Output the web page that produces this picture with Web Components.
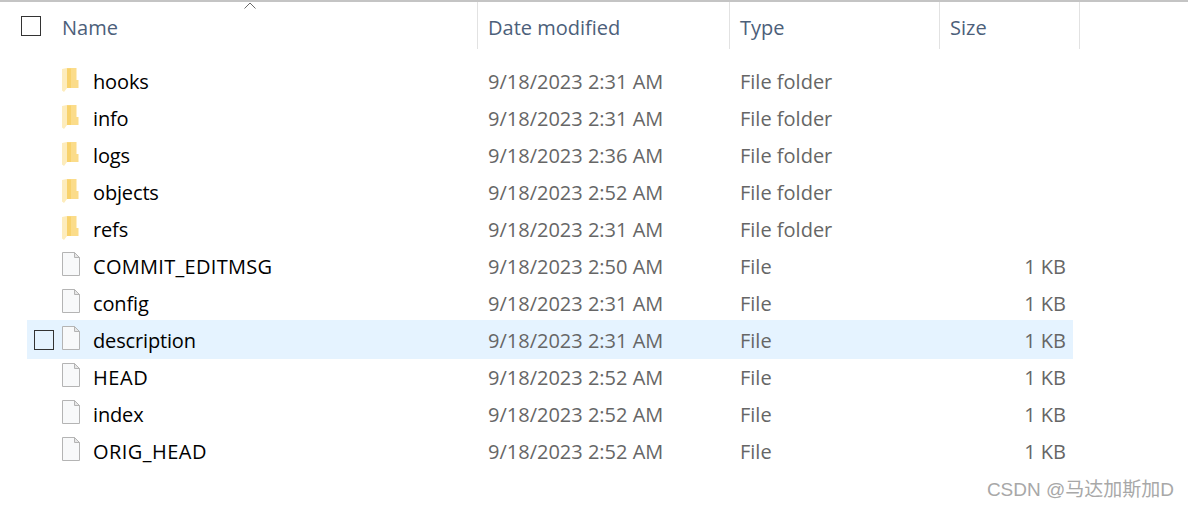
<!DOCTYPE html>
<html>
<head>
<meta charset="utf-8">
<style>
	html, body {margin: 0; background: #fff;}
	body {font-family: "Open Sans", sans-serif; height: 509px; overflow: hidden;}
</style>
</head>
<body>
<file-list>
	<file-row kind="folder" name="hooks" date="9/18/2023 2:31 AM" type="File folder"></file-row>
	<file-row kind="folder" name="info" date="9/18/2023 2:31 AM" type="File folder"></file-row>
	<file-row kind="folder" name="logs" date="9/18/2023 2:36 AM" type="File folder"></file-row>
	<file-row kind="folder" name="objects" date="9/18/2023 2:52 AM" type="File folder"></file-row>
	<file-row kind="folder" name="refs" date="9/18/2023 2:31 AM" type="File folder"></file-row>
	<file-row kind="file" name="COMMIT_EDITMSG" date="9/18/2023 2:50 AM" type="File" size="1 KB" style="--track:.3px"></file-row>
	<file-row kind="file" name="config" date="9/18/2023 2:31 AM" type="File" size="1 KB"></file-row>
	<file-row kind="file" name="description" date="9/18/2023 2:31 AM" type="File" size="1 KB" hot></file-row>
	<file-row kind="file" name="HEAD" date="9/18/2023 2:52 AM" type="File" size="1 KB" style="--track:.6px"></file-row>
	<file-row kind="file" name="index" date="9/18/2023 2:52 AM" type="File" size="1 KB"></file-row>
	<file-row kind="file" name="ORIG_HEAD" date="9/18/2023 2:52 AM" type="File" size="1 KB" style="--track:.45px"></file-row>
</file-list>
<script>
const icons = {
	folder: `<svg width="20" height="26" viewBox="0 0 20 26">
		<path d="M6 2h9.500v12h2V22H6z" fill="#fbdc8a"/>
		<path d="M6 2.500h4V22H6z" fill="#f8d26c"/>
		<path d="M1 3l5-1V22l-3 4-2-1.500z" fill="#fdecbc"/>
	</svg>`,
	file: `<svg width="20" height="26" viewBox="0 0 20 26">
		<path d="M1.500 1.500h12l5 5v18h-17z" fill="#f8f9fa" stroke="#b4b4b4"/>
		<path d="M13.500 1.500v5h5z" fill="#e6e6e6" stroke="#b4b4b4"/>
	</svg>`,
};

const listTemplate = document.createElement('template');
listTemplate.innerHTML = `
<style>
	:host {
		display: block;
		width: 1188px;
		border-top: 2px solid #c4c4c4;
		box-sizing: border-box;
		font-family: "Open Sans", sans-serif;
		font-size: 20px;
		position: relative;
	}
	.head {
		display: grid;
		grid-template-columns: 477px 252px 210px 140px 1px;
		height: 47px;
	}
	.head > div {
		color: #4c607a;
		line-height: 52px;
		height: 47px;
		padding-left: 10px;
		white-space: nowrap;
		box-sizing: border-box;
	}
	.head > div + div {border-left: 1px solid #e2e2e2;}
	.head .name {
		display: flex;
		align-items: flex-start;
		padding-left: 21px;
		gap: 21px;
		position: relative;
	}
	.check {
		display: block;
		width: 18px;
		height: 18px;
		border: 1px solid #333;
		margin-top: 14px;
	}
	.sort {
		position: absolute;
		left: 244px;
		top: 0;
	}
	.rows {
		padding-top: 13px;
	}
	.mark {
		position: absolute;
		right: 14px;
		top: 476px;
		font-family: "Liberation Sans", "Noto Sans CJK SC", sans-serif;
		font-size: 19px;
		line-height: 24px;
		color: #a8a8a8;
		white-space: nowrap;
	}
</style>
<div class="head">
	<div class="name"><span class="check"></span><span>Name</span>
		<svg class="sort" width="12" height="7" viewBox="0 0 12 7"><path d="M.5 6.500L6 1l5.500 5.500" fill="none" stroke="#6b6b6b"/></svg>
	</div>
	<div>Date modified</div>
	<div>Type</div>
	<div>Size</div>
	<div></div>
</div>
<div class="rows"><slot></slot></div>
<div class="mark">CSDN @马达加斯加D</div>
`;

customElements.define('file-list', class extends HTMLElement {
	constructor() {
		super();
		this.attachShadow({mode: 'open'}).appendChild(listTemplate.content.cloneNode(true));
	}
});

const rowTemplate = document.createElement('template');
rowTemplate.innerHTML = `
<style>
	:host {
		display: block;
		font-size: 20px;
	}
	.row {
		display: grid;
		grid-template-columns: 34px 32px 395px 252px 210px 123px;
		margin-left: 27px;
		width: 1046px;
		height: 37px;
		align-items: center;
		line-height: 35px;
		white-space: nowrap;
		color: #666;
	}
	.row > span {padding-top: 2px;}
	:host([hot]) .row {
		background: #e5f3ff;
		height: 39px;
		margin-block: -1px;
		position: relative;
	}
	.row > .check {
		display: block;
		visibility: hidden;
		width: 18px;
		height: 18px;
		padding: 0;
		border: 1px solid #333;
		margin-left: 7px;
	}
	:host([hot]) .check {visibility: visible;}
	.row > .icon {display: block; align-self: start; padding-top: 4px;}
	:host([hot]) .icon {padding-top: 5px;}
	svg {display: block;}
	.name {color: #000; letter-spacing: var(--track, -0.15px);}
	.size {text-align: right; padding-right: 7px;}
</style>
<div class="row">
	<span class="check"></span>
	<span class="icon"></span>
	<span class="name"></span>
	<span class="date"></span>
	<span class="type"></span>
	<span class="size"></span>
</div>
`;

customElements.define('file-row', class extends HTMLElement {
	constructor() {
		super();
		this.attachShadow({mode: 'open'}).appendChild(rowTemplate.content.cloneNode(true));
	}
	connectedCallback() {
		const root = this.shadowRoot;
		root.querySelector('.icon').innerHTML = icons[this.getAttribute('kind')];
		for (const key of ['name', 'date', 'type', 'size']) {
			root.querySelector('.' + key).textContent = this.getAttribute(key) || '';
		}
	}
});
</script>
</body>
</html>
